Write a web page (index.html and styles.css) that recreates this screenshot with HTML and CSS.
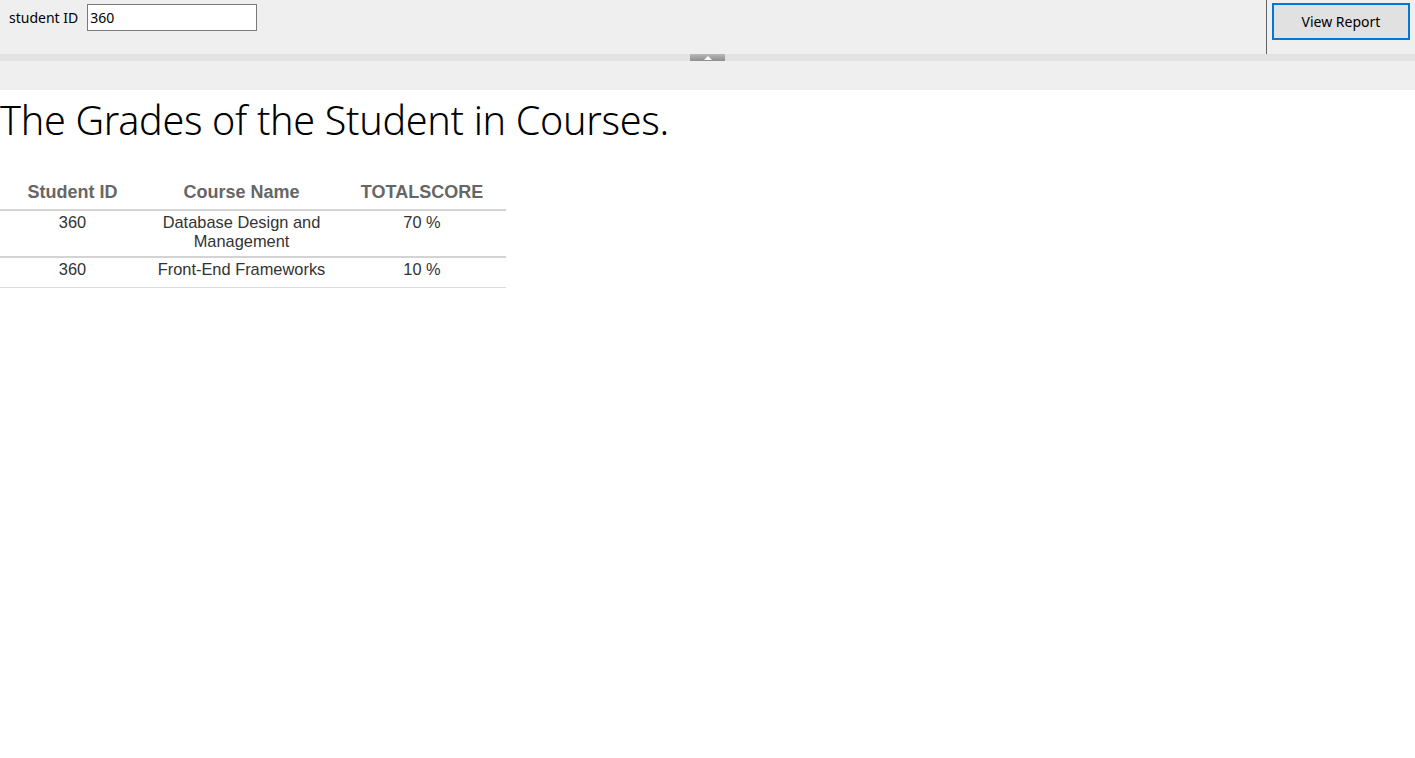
FILE: index.html
```html
<!DOCTYPE html>
<html>
<head>
<meta charset="utf-8">
<link rel="stylesheet" href="styles.css">
</head>
<body>
<div class="toolbar">
  <div class="params">
    <label class="param-label">student ID</label>
    <input class="param-input" type="text" value="360">
  </div>
  <div class="actions">
    <button class="view-btn">View Report</button>
  </div>
</div>
<div class="splitter"><div class="handle"><svg width="8" height="4" viewBox="0 0 8 4"><polygon points="0,4 8,4 4,0" fill="#fff"/></svg></div></div>
<div class="toolbar2"></div>
<div class="report">
  <h1 class="title">The Grades of the Student in Courses.</h1>
  <table class="grades">
    <thead>
      <tr><th class="c1">Student ID</th><th class="c2">Course Name</th><th class="c3">TOTALSCORE</th></tr>
    </thead>
    <tbody>
      <tr class="r1"><td>360</td><td>Database Design and<br>Management</td><td>70 %</td></tr>
      <tr class="r2"><td>360</td><td>Front-End Frameworks</td><td>10 %</td></tr>
    </tbody>
  </table>
</div>
</body>
</html>
```

FILE: styles.css
```css
html, body { margin: 0; padding: 0; background: #fff; }
body { font-family: "Segoe UI", "Noto Sans", "Open Sans", sans-serif; }

.toolbar {
  height: 54px;
  background: #efefef;
  display: flex;
  justify-content: space-between;
}
.params {
  display: flex;
  align-items: flex-start;
  padding: 4px 0 0 9px;
  gap: 9px;
}
.param-label {
  font-size: 14px;
  color: #000;
  line-height: 27px;
  height: 27px;
}
.param-input {
  box-sizing: border-box;
  width: 170px;
  height: 27px;
  border: 1px solid #7a7a7a;
  background: #fff;
  font-family: inherit;
  font-size: 14px;
  padding: 0 2px;
  margin: 0;
  color: #000;
  outline: none;
}
.actions {
  border-left: 1px solid #646464;
  padding: 3px 5px 0 5px;
  height: 51px;
}
.view-btn {
  box-sizing: border-box;
  width: 138px;
  height: 37px;
  border: 2px solid #0078d7;
  background: #e1e1e1;
  font-family: inherit;
  font-size: 14px;
  color: #000;
  margin: 0;
  padding: 0;
}
.splitter {
  height: 7px;
  background: #e2e2e2;
  display: flex;
  justify-content: center;
}
.handle {
  width: 35px;
  height: 7px;
  background: linear-gradient(#b8b8b8, #8e8e8e);
  display: flex;
  align-items: center;
  justify-content: center;
}
.handle svg { display: block; }
.toolbar2 { height: 29px; background: #efefef; }

.title {
  margin: 0;
  padding-top: 3px;
  font-family: "Segoe UI", "Noto Sans", "Open Sans", sans-serif;
  font-weight: 300;
  font-size: 39.5px;
  line-height: 54px;
  color: #000;
  letter-spacing: -0.3px;
}
.grades {
  margin-top: 28px;
  border-collapse: collapse;
  width: 506px;
  font-family: "Liberation Sans", Arial, sans-serif;
}
.grades th {
  font-size: 18px;
  font-weight: bold;
  color: #666;
  height: 34px;
  padding: 0;
  border-bottom: 2px solid #d3d3d3;
  vertical-align: middle;
}
.grades .c1 { width: 145px; }
.grades .c2 { width: 193px; }
.grades .c3 { width: 168px; }
.grades td {
  font-size: 16.4px;
  color: #333;
  text-align: center;
  vertical-align: top;
  line-height: 19px;
  padding: 2px 0 5px 0;
}
.grades .r1 td { border-bottom: 2px solid #d3d3d3; height: 38px; }
.grades .r2 td { border-bottom: 1px solid #dcdcdc; padding: 2px 0 8px; height: 19px; }
```
